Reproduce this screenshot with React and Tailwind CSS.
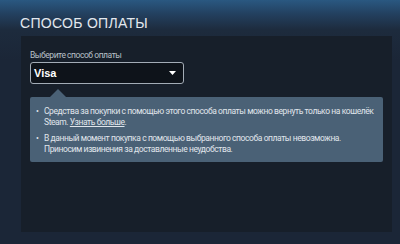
export default function App() {
  const small = { fontFamily: 'Roboto, "Liberation Sans", sans-serif' };
  return (
    <div
      className="w-[400px] h-[244px] overflow-hidden bg-[linear-gradient(to_bottom,#2a5881_0px,#23405f_14px,#1d2b3d_30px,#1b2637_60px,#1b2637_100%)] pt-[15px] pl-[20px] pr-[8px]"
      style={{ fontFamily: '"Liberation Sans", Arial, sans-serif' }}
    >
      <div className="text-[14px] leading-[16px] tracking-[0.3px] text-[#e3e8ee]">СПОСОБ ОПЛАТЫ</div>
      <div className="mt-[5px] ml-[1px] h-[196px] bg-[#171f2a] pt-[14px] pl-[9px] pr-[9px]">
        <div className="text-[8.5px] leading-[10px] tracking-[-0.45px] text-[#b8c0c8]" style={small}>Выберите способ оплаты</div>
        <div className="mt-[2px] w-[154px] h-[22px] rounded-[3px] border border-[#a3acb6] bg-[#0e131a] flex items-center justify-between pl-[3px] pr-[7px]">
          <span className="text-[11px] font-bold text-white">Visa</span>
          <svg width="7" height="4" viewBox="0 0 7 4"><path d="M0 0h7L3.5 4z" fill="#fff" /></svg>
        </div>
        <div className="relative mt-[13px] bg-[#4a6176] rounded-[2px] pt-[9px] pb-[7px] pl-[6px] pr-[4px] text-[8.5px] leading-[11px] tracking-[-0.42px] text-[#e0e6ec] whitespace-nowrap" style={small}>
          <div className="absolute -top-[8px] left-[20px] w-0 h-0 border-l-[8px] border-r-[8px] border-b-[8px] border-l-transparent border-r-transparent border-b-[#4a6176]" />
          <div className="flex">
            <span className="w-[8px] shrink-0">•</span>
            <span>
              Средства за покупки с помощью этого способа оплаты можно вернуть только на кошелёк
              <br />
              Steam. <span className="underline">Узнать больше</span>.
            </span>
          </div>
          <div className="flex mt-[5px]">
            <span className="w-[8px] shrink-0">•</span>
            <span>
              В данный момент покупка с помощью выбранного способа оплаты невозможна.
              <br />
              Приносим извинения за доставленные неудобства.
            </span>
          </div>
        </div>
      </div>
    </div>
  );
}
